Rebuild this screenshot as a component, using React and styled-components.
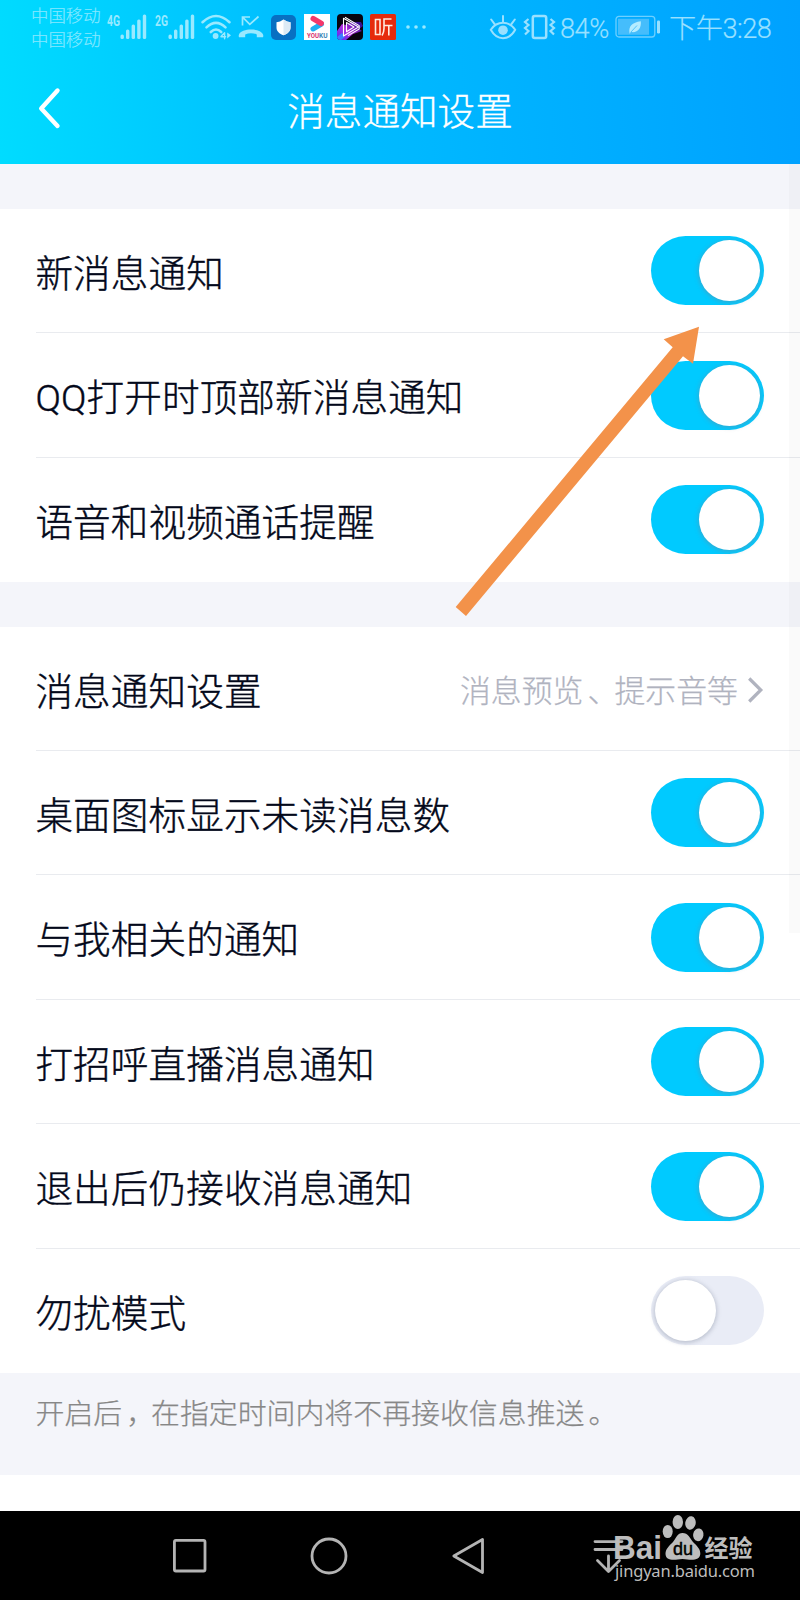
import React from 'react';
import styled, { createGlobalStyle } from 'styled-components';

const GlobalStyle = createGlobalStyle`
    * {
      box-sizing: border-box;
    }
    body {
      margin: 0;
      background-color: #ffffff;
      font-family: Roboto, "Noto Sans CJK SC", sans-serif;
    }
    svg {
      display: block;
      flex: none;
      overflow: visible;
    }
`;

const Screen = styled.div`
      position: relative;
      width: 800px;
      height: 1600px;
      display: flex;
      flex-direction: column;
      background-color: #ffffff;
      overflow: hidden;
      font-weight: 300;
`;

const Header = styled.header`
      flex: none;
      height: 164px;
      background: linear-gradient(86deg, #00dcff 0%, #00c0ff 34%, #00a1ff 100%);
`;

const StatusBar = styled.div`
      display: flex;
      align-items: center;
      height: 54px;
      padding: 0 26px 0 31px;
      color: #99e9ff;
`;

const Carriers = styled.div`
      width: 76px;
      margin-top: 2px;
      font-size: 17.4px;
      line-height: 24px;
      color: #84e8ff;
      -webkit-text-stroke: .2px;
`;

const StatusItem = styled.div`
      margin-left: ${({$gap}) => $gap}px;
`;

const StatusRight = styled.div`
      display: flex;
      align-items: center;
      margin-left: auto;
      color: #99e0ff;
`;

const StatusText = styled.span`
      width: ${({$width}) => $width}px;
      margin-top: 3px;
      margin-left: ${({$gap}) => $gap}px;
      font-size: 27.2px;
      line-height: 36px;
      letter-spacing: -0.5px;
      white-space: nowrap;
      -webkit-text-stroke: .2px;
`;

const TitleBar = styled.div`
      display: grid;
      grid-template-columns: 100px 1fr 100px;
      align-items: center;
      height: 110px;
`;

const BackButton = styled.button`
      display: flex;
      padding: 0 0 0 37px;
      border: 0;
      background: transparent;
      color: #ffffff;
`;

const Title = styled.h1`
      margin: 6px 0 0;
      text-align: center;
      font-size: 37.6px;
      line-height: 54px;
      font-weight: 300;
      color: #ffffff;
      -webkit-text-stroke: .3px;
`;

const Gap = styled.div`
      flex: none;
      height: ${({$height}) => $height}px;
      background-color: #f4f5fa;
`;

const Section = styled.section`
      flex: none;
      height: ${({$height}) => $height}px;
      display: flex;
      flex-direction: column;
      padding-left: 36px;
`;

const Row = styled.div`
      flex: 1;
      display: flex;
      align-items: center;
      justify-content: space-between;
      padding: .6px 36px 0 0;
      border-bottom: 1px solid #e9ebef;

      &:last-child {
        border-bottom-color: transparent;
      }
`;

const Label = styled.span`
      margin: 6px 0 0 -0.6px;
      font-size: 37.6px;
      line-height: 54px;
      letter-spacing: .12px;
      color: #03081a;
      -webkit-text-stroke: .4px;
`;

const Switch = styled.div`
      display: flex;
      justify-content: ${({$on}) => ($on ? 'flex-end' : 'flex-start')};
      width: 113.5px;
      height: 69px;
      padding: 4px;
      border-radius: 35px;
      background-color: ${({$on}) => ($on ? '#00caff' : '#e9ecf6')};
`;

const Knob = styled.div`
      width: 61px;
      height: 61px;
      border-radius: 50%;
      background-color: #ffffff;
      box-shadow: 0 1px 4px 1px rgba(120, 130, 150, .4);
`;

const RowValue = styled.div`
      display: flex;
      align-items: center;
      gap: 10px;
      padding-right: 1px;
      font-size: 30.9px;
      line-height: 44px;
      color: #b0b3bf;
      -webkit-text-stroke: .25px;
`;

const ValueText = styled.span`
      margin-top: 6px;
`;

// nudges a full-width mark towards the middle of its cell
const Mark = styled.span`
      margin: 0 -4px 0 4px;
`;

const Note = styled.p`
      flex: none;
      height: 102px;
      margin: 0;
      padding: 20px 36px 0 35.5px;
      background-color: #f4f5fa;
      font-size: 28.9px;
      line-height: 42px;
      color: #878787;
      -webkit-text-stroke: .25px;
`;

const NavBar = styled.nav`
      display: flex;
      align-items: center;
      height: 89px;
      margin-top: auto;
      padding-left: 172px;
      background-color: #000000;
      color: #b4b4b4;
`;

const NavItem = styled.div`
      margin-left: ${({$gap}) => $gap}px;
`;

const ScrollThumb = styled.div`
      position: absolute;
      top: 164px;
      right: 0;
      width: 11px;
      height: 769px;
      background-color: rgba(0, 0, 0, .02);
`;

const Arrow = styled.svg`
      position: absolute;
      left: 455px;
      top: 326px;
`;

const Watermark = styled.svg`
      position: absolute;
      left: 610px;
      top: 1510px;
`;

const Signal = ({label}) => (
    <svg width="40" height="26" viewBox="0 0 40 26" fill="currentColor">
        <text x="0" y="11.5" fontSize="14" fontWeight="700" textLength="13" lengthAdjust="spacingAndGlyphs">{label}</text>
        <rect x="13.5" y="20.5" width="3.4" height="4.5" rx="1.5" />
        <rect x="19" y="15.5" width="3.4" height="9.5" rx="1.5" />
        <rect x="24.6" y="10.5" width="3.4" height="14.5" rx="1.5" />
        <rect x="30.2" y="5.5" width="3.4" height="19.5" rx="1.5" />
        <rect x="35.8" y="0.5" width="3.4" height="24.5" rx="1.5" />
    </svg>
);

const Wifi = () => (
    <svg width="30" height="26" viewBox="0 0 30 26" fill="none" stroke="currentColor" strokeWidth="2.6" strokeLinecap="round">
        <path d="M1.5 8.2Q15 -4.2 28.5 8.2" />
        <path d="M5.5 13.4Q15 4.4 24.5 13.4" />
        <path d="M9.8 18Q15 13 20.2 18" />
        <circle cx="14.6" cy="22" r="2.9" fill="currentColor" stroke="none" />
        <path d="M23.6 18.8V24.8M20 22.7H24.6M20 22.5L23 19.2" strokeWidth="1.4" />
        <path d="M26.2 18.4L30 21.2L26.2 24.6Z" fill="currentColor" stroke="none" />
    </svg>
);

const MissedCall = () => (
    <svg width="26" height="24" viewBox="0 0 26 24" fill="none" stroke="currentColor" strokeWidth="1.7">
        <path d="M4.5 10.5V2H12M4.8 2.3L11.8 9.3L20.5 1.5" />
        <path d="M1 22.2Q.4 20.6 1 19.4C3.5 13 22.5 13 25 19.4Q25.6 20.6 25 22.2H18.8V19.4C15.5 18 10.5 18 7.2 19.4V22.2Z" fill="currentColor" stroke="none" />
    </svg>
);

const ShieldApp = () => (
    <svg width="25" height="25" viewBox="0 0 25 25">
        <rect width="25" height="25" rx="5" fill="#0870c2" />
        <path d="M12.5 4.5Q16 7 19.5 7.2V12.5C19.5 16.5 16.5 18.8 12.5 20.3C8.5 18.8 5.5 16.5 5.5 12.5V7.2Q9 7 12.5 4.5Z" fill="#ffffff" />
        <path d="M12.5 4.5Q16 7 19.5 7.2V12.5C19.5 16.5 16.5 18.8 12.5 20.3Z" fill="#dceaf5" />
    </svg>
);

const YoukuApp = () => (
    <svg width="26" height="26" viewBox="0 0 26 26">
        <rect width="26" height="26" fill="#ffffff" />
        <path d="M9 15L17.5 10" stroke="#21aef0" strokeWidth="5" strokeLinecap="round" />
        <path d="M9.2 4.6L17.2 9.4" stroke="#f5386b" strokeWidth="5.4" strokeLinecap="round" />
        <text x="3" y="24" fontSize="6.4" fontWeight="700" textLength="12" lengthAdjust="spacingAndGlyphs" fill="#d8306c">YOU</text>
        <text x="15" y="24" fontSize="6.4" fontWeight="700" textLength="8.5" lengthAdjust="spacingAndGlyphs" fill="#3a86b8">KU</text>
    </svg>
);

const PlayApp = () => (
    <svg width="26" height="26" viewBox="0 0 26 26">
        <defs>
            <linearGradient id="neon" x1="0" y1="1" x2="1" y2=".3">
                <stop offset="0" stopColor="#4a2ff0" />
                <stop offset=".5" stopColor="#b42ce0" />
                <stop offset="1" stopColor="#371093" />
            </linearGradient>
        </defs>
        <rect width="26" height="26" rx="4" fill="#08040f" />
        <path d="M0 17L5 10L9 11L15 8L24 8L26 12L22 15L25 17L16 20L9 26H4Q0 26 0 22Z" fill="url(#neon)" />
        <path d="M5 19L0 23Q1 26 4 26L8 23Z" fill="#3a7cff" />
        <g fill="none" stroke="#ffffff" strokeWidth="1.1" strokeLinejoin="round">
            <path d="M6.5 4.2L21.5 13L6.5 22Z" />
            <path d="M9.5 8.5V17.8L17 13ZM8 3.2L22.2 11.6V15L11 21.6" />
        </g>
    </svg>
);

const ListenApp = () => (
    <svg width="26" height="26" viewBox="0 0 26 26">
        <rect width="26" height="26" rx="1.5" fill="#e62b0c" />
        <g fill="none" stroke="#ffe9de" strokeWidth="1.6">
            <path d="M5.5 5.5H10V20.5H5.5Z" />
            <path d="M21.5 5H14V14.5Q14 18.5 12 21.5M14 11.5H22.5M18.8 11.5V21.5" />
        </g>
    </svg>
);

const Dots = () => (
    <svg width="20" height="4" viewBox="0 0 20 4" fill="currentColor">
        <circle cx="2" cy="2" r="1.8" />
        <circle cx="10" cy="2" r="1.8" />
        <circle cx="18" cy="2" r="1.8" />
    </svg>
);

const Eye = () => (
    <svg width="28" height="26" viewBox="0 0 28 26" fill="none" stroke="currentColor" strokeWidth="2" strokeLinecap="round">
        <path d="M1.8 15.8C8 6.5 20 6.5 26.2 15.8C20 27 8 27 1.8 15.8Z" />
        <circle cx="14" cy="16.2" r="4.8" fill="currentColor" stroke="none" />
        <path d="M14 2V8M2.2 5.5L5.8 10.4M25.8 5.5L22.2 10.4" />
    </svg>
);

const Vibrate = () => (
    <svg width="33" height="26" viewBox="0 0 33 26" fill="none" stroke="currentColor" strokeWidth="2.2">
        <rect x="9.8" y="2" width="13.4" height="22" rx="2" strokeWidth="2.5" />
        <path d="M5.5 5L2 8L5.5 11L2 14L5.5 17L2 20.5M27.5 5L31 8L27.5 11L31 14L27.5 17L31 20.5" />
    </svg>
);

const Battery = () => (
    <svg width="46" height="24" viewBox="0 0 46 24">
        <rect x="1" y="1.4" width="38.8" height="20.6" rx="3" fill="none" stroke="#6dcfff" strokeWidth="1.3" />
        <rect x="3" y="3.8" width="31" height="16" fill="#45bdfc" />
        <path d="M14.5 18C13.5 11 17 7.5 25.8 6.2C26.5 13 23 18 16.2 17L14.6 18.8Z" fill="#b5ecff" />
        <path d="M15.5 17.5L22 10.5" stroke="#45bdfc" strokeWidth=".9" />
        <rect x="42" y="5.4" width="3" height="13" rx="1.2" fill="currentColor" />
    </svg>
);

const Toggle = ({on}) => (
    <Switch $on={on}>
        <Knob />
    </Switch>
);

const alerts = [
    {label: '新消息通知', on: true},
    {label: 'QQ打开时顶部新消息通知', on: true},
    {label: '语音和视频通话提醒', on: true},
];

const messages = [
    {label: '消息通知设置', value: <>消息预览<Mark>、</Mark>提示音等</>},
    {label: '桌面图标显示未读消息数', on: true},
    {label: '与我相关的通知', on: true},
    {label: '打招呼直播消息通知', on: true},
    {label: '退出后仍接收消息通知', on: true},
    {label: '勿扰模式', on: false},
];

const SettingRow = ({label, value, on}) => (
    <Row>
        <Label>{label}</Label>
        {value ? (
            <RowValue>
                <ValueText>{value}</ValueText>
                <svg width="15" height="26" viewBox="0 0 15 26" fill="none" stroke="currentColor" strokeWidth="3.2">
                    <path d="M1.2 2.5L12.8 14L1.2 25.5" />
                </svg>
            </RowValue>
        ) : (
            <Toggle on={on} />
        )}
    </Row>
);

const App = () => (
    <>
        <GlobalStyle />
        <Screen>
            <Header>
                <StatusBar>
                    <Carriers>
                        <div>中国移动</div>
                        <div>中国移动</div>
                    </Carriers>
                    <StatusItem $gap={0}><Signal label="4G" /></StatusItem>
                    <StatusItem $gap={8}><Signal label="2G" /></StatusItem>
                    <StatusItem $gap={6}><Wifi /></StatusItem>
                    <StatusItem $gap={7}><MissedCall /></StatusItem>
                    <StatusItem $gap={7}><ShieldApp /></StatusItem>
                    <StatusItem $gap={8}><YoukuApp /></StatusItem>
                    <StatusItem $gap={7}><PlayApp /></StatusItem>
                    <StatusItem $gap={7}><ListenApp /></StatusItem>
                    <StatusItem $gap={10}><Dots /></StatusItem>
                    <StatusRight>
                        <Eye />
                        <StatusItem $gap={6}><Vibrate /></StatusItem>
                        <StatusText $width={50} $gap={4}>84%</StatusText>
                        <StatusItem $gap={5}><Battery /></StatusItem>
                        <StatusText $width={105} $gap={8}>下午3:28</StatusText>
                    </StatusRight>
                </StatusBar>
                <TitleBar>
                    <BackButton>
                        <svg width="24" height="42" viewBox="0 0 24 42" fill="none" stroke="currentColor" strokeWidth="4.4" strokeLinecap="round" strokeLinejoin="round">
                            <path d="M20.5 2.5L4.2 20.5L20.5 38" />
                        </svg>
                    </BackButton>
                    <Title>消息通知设置</Title>
                </TitleBar>
            </Header>

            <Gap $height={45} />
            <Section $height={373}>
                {alerts.map((item) => <SettingRow key={item.label} {...item} />)}
            </Section>

            <Gap $height={44.5} />
            <Section $height={746.5}>
                {messages.map((item) => <SettingRow key={item.label} {...item} />)}
            </Section>
            <Note>开启后<Mark>，</Mark>在指定时间内将不再接收信息推送<Mark>。</Mark></Note>

            <NavBar>
                <NavItem $gap={0}>
                    <svg width="36" height="36" viewBox="0 0 36 36" fill="none" stroke="currentColor" strokeWidth="2.8">
                        <rect x="2.4" y="2.4" width="30.6" height="30.6" rx="1.5" />
                    </svg>
                </NavItem>
                <NavItem $gap={102}>
                    <svg width="38" height="38" viewBox="0 0 38 38" fill="none" stroke="currentColor" strokeWidth="2.8">
                        <circle cx="19" cy="19" r="17" />
                    </svg>
                </NavItem>
                <NavItem $gap={103}>
                    <svg width="36" height="38" viewBox="0 0 36 38" fill="none" stroke="currentColor" strokeWidth="2.8" strokeLinejoin="round">
                        <path d="M31.5 2.5V35.5L2.8 19Z" />
                    </svg>
                </NavItem>
                <NavItem $gap={106}>
                    <svg width="32" height="36" viewBox="0 0 32 36" fill="none" stroke="currentColor" strokeWidth="2.8" strokeLinecap="round" strokeLinejoin="round">
                        <path d="M2 3.6H29M2 11.5H29M15.5 18V33.5M4.5 22.5L15.5 33.5L26.5 22.5" />
                    </svg>
                </NavItem>
            </NavBar>

            <ScrollThumb />

            <Arrow width="246" height="292" viewBox="455 326 246 292">
                <path d="M699 326.7L663.7 339.3L672.7 347.3L455.7 607L466 616L683 356.3L693 363.7Z" fill="#f3924a" />
            </Arrow>

            <Watermark width="150" height="80" viewBox="610 1510 150 80" fill="#bdbdbd">
                <text x="613" y="1559" fontFamily="Liberation Sans" fontSize="32.5" fontWeight="700" textLength="49" lengthAdjust="spacingAndGlyphs">Bai</text>
                <ellipse cx="667.7" cy="1531.5" rx="5" ry="6.6" />
                <ellipse cx="677.8" cy="1522" rx="5.2" ry="7" />
                <ellipse cx="690.5" cy="1523" rx="5.2" ry="6.8" transform="rotate(10 690.5 1523)" />
                <ellipse cx="698.3" cy="1534.8" rx="5.2" ry="6.4" transform="rotate(10 698.3 1534.8)" />
                <path d="M682.5 1533C688 1533 690 1538 693 1542C697 1546 700.5 1549 700.3 1554C699.5 1560 694 1560.5 682.5 1559C671 1560.5 666 1560 665.5 1554C665.5 1549 669 1546 673 1542C676 1538 677.5 1533 682.5 1533Z" />
                <text x="673" y="1555" fontFamily="Liberation Sans" fontSize="19" fontWeight="400" textLength="20" lengthAdjust="spacingAndGlyphs" fill="#000000" stroke="#000000" strokeWidth=".5">du</text>
                <text x="704.5" y="1557" fontFamily="Noto Sans CJK SC" fontSize="24" fontWeight="700" textLength="48">经验</text>
                <text x="615" y="1577" fontFamily="Noto Sans" fontSize="16.5" fontWeight="400" textLength="140">jingyan.baidu.com</text>
            </Watermark>
        </Screen>
    </>
);

export default App;
